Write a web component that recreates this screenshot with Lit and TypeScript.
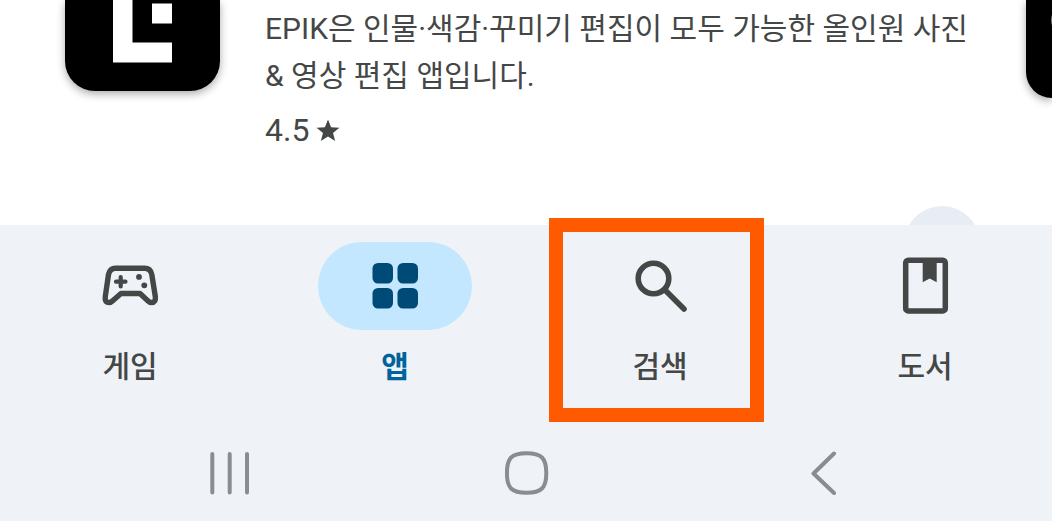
import { LitElement, html, svg, css } from "lit";
import { customElement, property } from "lit/decorators.js";

const icons = {
  games: svg`<svg viewBox="0 0 64 64" width="64" height="64" aria-hidden="true">
    <path d="M17.500 14.300H46.500Q52.500 14.300 53.800 20.500L57.300 42.500Q58 48.500 53.500 48.500Q51.500 48.500 49.500 46.500L42 39.500H23L15 46.500Q13 48.500 11 48.500Q6.500 48.500 7.300 42.500L10.500 20.500Q12 14.300 17.500 14.300Z"
      fill="none" stroke="currentColor" stroke-width="5.400" stroke-linejoin="round"/>
    <path d="M22.700 23V32.500M18 27.700H27.500" stroke="currentColor" stroke-width="4.200" stroke-linecap="round"/>
    <circle cx="41" cy="22.900" r="2.900" fill="currentColor"/><circle cx="46.300" cy="31.300" r="2.900" fill="currentColor"/></svg>`,
  apps: svg`<svg viewBox="0 0 64 64" width="64" height="64" aria-hidden="true" fill="currentColor">
    <rect x="9.500" y="9" width="20.500" height="20.500" rx="5.500"/><rect x="34.500" y="9" width="20.500" height="20.500" rx="5.500"/>
    <rect x="9.500" y="34" width="20.500" height="20.500" rx="5.500"/><rect x="34.500" y="34" width="20.500" height="20.500" rx="5.500"/></svg>`,
  search: svg`<svg viewBox="0 0 64 64" width="64" height="64" aria-hidden="true" fill="none" stroke="currentColor">
    <circle cx="25.500" cy="24.500" r="15.300" stroke-width="5.600"/>
    <path d="M36.500 35.500L56 55" stroke-width="5.600" stroke-linecap="round"/></svg>`,
  books: svg`<svg viewBox="0 0 64 64" width="64" height="64" aria-hidden="true">
    <rect x="12.700" y="6.200" width="39.600" height="50.700" rx="2.500" fill="none" stroke="currentColor" stroke-width="5.500"/>
    <path d="M29.700 6H43.700V28.300L36.700 24.500L29.700 28.300Z" fill="currentColor"/></svg>`,
};

type Tab = { id: keyof typeof icons; label: string; active?: boolean; marked?: boolean };

const tabs: Tab[] = [
  { id: "games", label: "게임" },
  { id: "apps", label: "앱", active: true },
  { id: "search", label: "검색", marked: true },
  { id: "books", label: "도서" },
];

@customElement("app-card")
class AppCard extends LitElement {
  static styles = css`
    :host { display: flex; align-items: flex-start; height: 225px; padding-left: 65px; overflow: hidden; position: relative; }
    .icon { flex: none; width: 155px; height: 91px; border-radius: 0 0 30px 30px; background: #000; box-shadow: 0 3px 8px #0005; }
    .icon svg, .next svg { display: block; }
    .info { flex: 1; min-width: 0; padding: 5px 0 0 45px; color: #444746; font-size: 30px; line-height: 47px; }
    .desc { margin: 0; }
    .desc span { display: block; white-space: nowrap; }
    .rating { display: flex; align-items: center; gap: 7px; margin: 8px 0 0; font-size: 32px; }
    .next { flex: none; width: 26px; height: 98px; border-radius: 0 0 0 32px; background: #000; box-shadow: 0 3px 8px #0005; overflow: hidden; }
    .fab { position: absolute; right: 72px; top: 206px; width: 76px; height: 76px; border: 0; border-radius: 50%; background: #e7ecf5; }
  `;
  render() {
    return html`
      <div class="icon">
        <svg viewBox="0 0 155 91" width="155" height="91" aria-hidden="true" fill="#fff">
          <path d="M48 0H67.500V42.500H107V62.500H48Z"/><rect x="87" y="3.500" width="20" height="20"/>
        </svg>
      </div>
      <div class="info">
        <p class="desc"><span>EPIK은 인물·색감·꾸미기 편집이 모두 가능한 올인원 사진</span><span>&amp; 영상 편집 앱입니다.</span></p>
        <p class="rating">4.5
          <svg viewBox="0 0 24 24" width="24" height="24" aria-hidden="true" fill="currentColor">
            <path d="M12 .500L15.100 8.200L23.400 8.700L17 14L19.200 22L12 17.500L4.800 22L7 14L.600 8.700L8.900 8.200Z"/>
          </svg>
        </p>
      </div>
      <div class="next">
        <svg viewBox="0 0 26 98" width="26" height="98" aria-hidden="true"><ellipse cx="34" cy="20" rx="8.500" ry="16" fill="#fff"/></svg>
      </div>
      <button class="fab" aria-label="+"></button>`;
  }
}

@customElement("tab-bar")
class TabBar extends LitElement {
  @property({ attribute: false }) items: Tab[] = [];
  static styles = css`
    nav { display: flex; justify-content: space-between; padding: 17px 50px 0 53px; }
    .tab { position: relative; display: flex; flex-direction: column; align-items: center; width: 154px; padding: 0; border: 0; background: none; color: #444746; font: inherit; cursor: pointer; }
    .pill { display: flex; align-items: center; justify-content: center; width: 154px; height: 88px; border-radius: 44px; }
    .label { margin-top: 15px; font-size: 30px; line-height: 44px; font-weight: 500; }
    .active { color: #00639b; }
    .active .label { font-weight: 700; }
    .active .pill { background: #c2e7ff; color: #004a77; }
    .mark { position: absolute; inset: -24px -27px -33px -34px; border: 14px solid #ff5a00; }
  `;
  render() {
    return html`<nav>${this.items.map((t) => html`
      <button class="tab ${t.active ? "active" : ""}">
        <span class="pill">${icons[t.id]}</span><span class="label">${t.label}</span>
        ${t.marked ? html`<span class="mark"></span>` : ""}
      </button>`)}</nav>`;
  }
}

@customElement("system-bar")
class SystemBar extends LitElement {
  static styles = css`
    :host { display: flex; justify-content: space-between; padding: 0 206px 0 208px; color: #898d8f; }
    button { display: block; padding: 0; border: 0; background: none; color: inherit; }
    svg { display: block; fill: none; stroke: currentColor; stroke-width: 4; stroke-linecap: round; stroke-linejoin: round; }
  `;
  render() {
    return html`
      <button aria-label="|||"><svg viewBox="0 0 44 44" width="44" height="44"><path d="M4.300 3V41.500M21.700 3V41.500M39 3V41.500"/></svg></button>
      <button aria-label="○"><svg viewBox="0 0 44 44" width="44" height="44"><path d="M21.500 2.200C36.500 2.200 41.300 7 41.300 22C41.300 37 36.500 41.800 21.500 41.800C6.500 41.800 1.900 37 1.900 22C1.900 7 6.500 2.200 21.500 2.200Z"/></svg></button>
      <button aria-label="‹"><svg viewBox="0 0 44 44" width="44" height="44"><path d="M32 2.500L11.500 22.500L32 42"/></svg></button>`;
  }
}

@customElement("app-root")
class AppRoot extends LitElement {
  static styles = css`
    :host { display: block; min-height: 100vh; overflow: hidden; background: #fff; font-family: Roboto, "Noto Sans CJK KR", sans-serif; }
    .bottom { position: relative; min-height: calc(100vh - 225px); background: #eff3f8; }
    .system { margin-top: 62px; }
  `;
  render() {
    return html`
      <app-card></app-card>
      <div class="bottom">
        <tab-bar .items=${tabs}></tab-bar>
        <system-bar class="system"></system-bar>
      </div>`;
  }
}
